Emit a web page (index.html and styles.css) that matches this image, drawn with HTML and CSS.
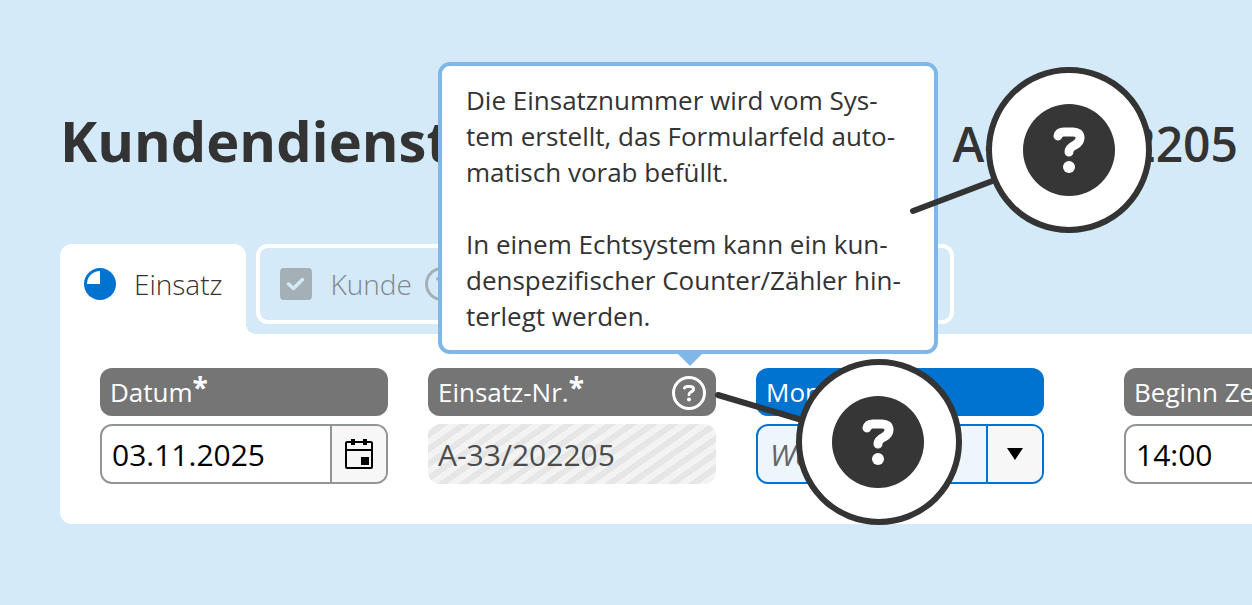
FILE: index.html
```html
<!DOCTYPE html>
<html lang="de">
<head>
<meta charset="utf-8">
<title>Kundendienst</title>
<link rel="stylesheet" href="styles.css">
</head>
<body>
<svg class="defs" width="0" height="0" aria-hidden="true">
  <symbol id="question" viewBox="0 0 92 92">
    <path d="M35 32 Q36 28 41 28 H50 Q57 28 57 34 Q57 38 52 41 Q46 44 46 48" fill="none" stroke="currentColor" stroke-width="9" stroke-linecap="round" stroke-linejoin="round"/>
    <circle cx="46" cy="63" r="6" fill="currentColor"/>
  </symbol>
  <symbol id="help" viewBox="0 0 36 36">
    <circle cx="18" cy="18" r="15.5" fill="none" stroke="currentColor" stroke-width="3"/>
    <path d="M13.500 13 Q14 11.500 16 11.500 H19 Q22.500 11.500 22.500 14 Q22.500 16 20 17 Q18 18 18 19.500" fill="none" stroke="currentColor" stroke-width="3" stroke-linecap="round"/>
    <circle cx="18" cy="24.500" r="2" fill="currentColor"/>
  </symbol>
</svg>

<main class="page">
  <header class="head">
    <h1 class="head-title">Kundendienst</h1>
    <span class="head-number">A-33/202205</span>
  </header>

  <nav class="tabs">
    <button class="tab tab-active" type="button">
      <svg class="tab-icon" viewBox="0 0 32 32" aria-hidden="true"><circle cx="16" cy="16" r="16" fill="#0072d0"/><path d="M16 3 V16 H3 A13 13 0 0 1 16 3Z" fill="#fff"/></svg>
      Einsatz
    </button>
    <button class="tab tab-idle" type="button">
      <svg class="tab-icon" viewBox="0 0 32 32" aria-hidden="true"><rect width="32" height="32" rx="4" fill="#a5b0b6"/><path d="M8.500 16 L13.500 20.500 L22.500 11.500" fill="none" stroke="#d5eaf8" stroke-width="3.500" stroke-linecap="round" stroke-linejoin="round"/></svg>
      Kunde
      <svg class="tab-help" aria-hidden="true"><use href="#help"/></svg>
    </button>
  </nav>

  <form class="panel">
    <div class="field">
      <label class="label" for="datum">Datum<b class="required">*</b></label>
      <div class="control">
        <input class="input" id="datum" type="text" value="03.11.2025">
        <button class="control-end" type="button" aria-label="Kalender">
          <svg width="28" height="32" viewBox="0 0 28 32" aria-hidden="true"><rect x="1" y="4" width="26" height="26" rx="1" fill="none" stroke="#000" stroke-width="2"/><path d="M1 12H27" stroke="#000" stroke-width="2"/><path d="M6 1h4v6H6zM18 1h4v6h-4zM16 19h8v8h-8z"/></svg>
        </button>
      </div>
    </div>
    <div class="field">
      <div class="label">
        <label class="label-text" for="nummer">Einsatz-Nr.<b class="required">*</b></label>
        <button class="label-help" type="button" aria-label="Hilfe"><svg width="36" height="36" aria-hidden="true"><use href="#help"/></svg></button>
      </div>
      <div class="control control-locked">
        <input class="input" id="nummer" type="text" value="A-33/202205" readonly>
      </div>
    </div>
    <div class="field field-focus">
      <label class="label" for="monteur">Monteur</label>
      <div class="control">
        <select class="input select" id="monteur"><option>Wählen</option></select>
        <span class="control-end"><svg width="16" height="12" viewBox="0 0 16 12" aria-hidden="true"><path d="M0 0H16L8 12Z"/></svg></span>
      </div>
    </div>
    <div class="field field-apart">
      <label class="label" for="beginn">Beginn Zeit</label>
      <div class="control">
        <input class="input" id="beginn" type="text" value="14:00">
      </div>
    </div>
  </form>

  <div class="tooltip" role="tooltip">
    <p>Die Einsatznummer wird vom Sys-<br>tem erstellt, das Formularfeld auto-<br>matisch vorab befüllt.</p>
    <p>In einem Echtsystem kann ein kun-<br>denspezifischer Counter/Zähler hin-<br>terlegt werden.</p>
  </div>

  <svg class="callouts" width="1252" height="605" aria-hidden="true">
    <g stroke="#343434" stroke-width="6" stroke-linecap="round">
      <path d="M913 211 L995 180"/>
      <path d="M718 395 L802 420"/>
      <circle cx="1069" cy="150" r="80" fill="#fff"/>
      <circle cx="879" cy="442" r="80" fill="#fff"/>
    </g>
    <g fill="#363636">
      <circle cx="1069" cy="150" r="46"/>
      <circle cx="878" cy="442" r="46"/>
    </g>
    <g color="#fff">
      <use href="#question" x="1023" y="104" width="92" height="92"/>
      <use href="#question" x="832" y="396" width="92" height="92"/>
    </g>
  </svg>
</main>
</body>
</html>
```
FILE: styles.css
```css
* {
  box-sizing: border-box;
}

body {
  margin: 0;
  background: #d5eaf8;
  color: #333;
  font-family: "Open Sans", "Noto Sans", sans-serif;
  overflow: hidden;
}

button,
input,
select {
  margin: 0;
  border: 0;
  padding: 0;
  background: none;
  color: inherit;
  font: inherit;
  outline: 0;
}

.defs {
  position: absolute;
}

.page {
  position: relative;
  min-height: 100vh;
  padding: 102px 0 80px 60px;
}

.head {
  display: flex;
  align-items: baseline;
  justify-content: space-between;
  height: 76px;
  margin-bottom: 66px;
  padding-right: 14px;
  line-height: 76px;
}

.head-title {
  margin: 0;
  font-size: 56px;
  font-weight: 700;
}

.head-number {
  font-size: 48px;
  font-weight: 600;
}

.tabs {
  display: flex;
  align-items: flex-start;
  gap: 10px;
}

.tab {
  display: flex;
  align-items: center;
  gap: 18px;
  height: 80px;
  border-radius: 12px;
  font-size: 28px;
  font-weight: 300;
}

.tab-active {
  position: relative;
  height: 90px;
  padding: 0 24px 10px;
  border-radius: 12px 12px 0 0;
  background: #fff;
}

.tab-active::after {
  content: "";
  position: absolute;
  left: 100%;
  bottom: 0;
  width: 10px;
  height: 10px;
  background: radial-gradient(circle at 100% 0, transparent 10px, #fff 10px);
}

.tab-idle {
  flex: 0 0 698px;
  padding: 0 20px;
  border: 4px solid #fff;
  color: #7d878d;
}

.tab-icon {
  width: 32px;
  height: 32px;
}

.tab-help {
  width: 36px;
  height: 36px;
  margin-left: -6px;
  color: #a5b0b6;
}

.panel {
  display: flex;
  gap: 40px;
  padding: 34px 0 40px 40px;
  border-radius: 0 0 0 12px;
  background: #fff;
  overflow: hidden;
}

.field {
  flex: 0 0 25%;
  display: grid;
  gap: 8px;
}

.field-apart {
  margin-left: 40px;
}

.label {
  display: flex;
  align-items: center;
  justify-content: space-between;
  height: 48px;
  padding: 0 9px 0 10px;
  border-radius: 12px;
  background: #757575;
  color: #fff;
  font-size: 26px;
}

.label:not(div) {
  justify-content: flex-start;
}

.label-text {
  display: flex;
  align-items: center;
}

.required {
  padding-bottom: 10px;
  font-size: 28px;
  line-height: 1;
}

.label-help {
  display: flex;
  padding-top: 2px;
}

.control {
  display: flex;
  height: 60px;
  border: 2px solid #919594;
  border-radius: 12px;
  background: #fff;
  color: #000;
  font-size: 30px;
  overflow: hidden;
}

.input {
  flex: 1;
  min-width: 0;
  padding: 0 10px;
}

.control-end {
  display: flex;
  align-items: center;
  justify-content: center;
  width: 56px;
  border-left: 2px solid #919594;
  background: #f7f7f7;
}

.control-locked {
  border-color: transparent;
  background: repeating-linear-gradient(145deg, #f3f3f3 0 6px, #e6e6e6 6px 12px) border-box;
  color: #4b4b4b;
}

.control-locked .input {
  padding-left: 8px;
}

.field-focus .label {
  background: #0072d0;
}

.field-focus .control,
.field-focus .control-end {
  border-color: #0072d0;
}

.field-focus .control {
  background: #eef6fd;
}

.select {
  appearance: none;
  padding-left: 12px;
  color: #666;
  font-style: italic;
}

.tooltip {
  position: absolute;
  top: 62px;
  left: 438px;
  width: 500px;
  padding: 16px 24px;
  border: 4px solid #7fb7e8;
  border-radius: 12px;
  background: #fff;
  font-size: 26px;
  line-height: 36px;
}

.tooltip::after {
  content: "";
  position: absolute;
  top: 100%;
  left: 232px;
  border: 16px solid transparent;
  border-top-color: #7fb7e8;
}

.tooltip p {
  margin: 0 0 36px;
  white-space: nowrap;
}

.tooltip p:last-child {
  margin-bottom: 0;
}

.callouts {
  position: absolute;
  top: 0;
  left: 0;
}
```
